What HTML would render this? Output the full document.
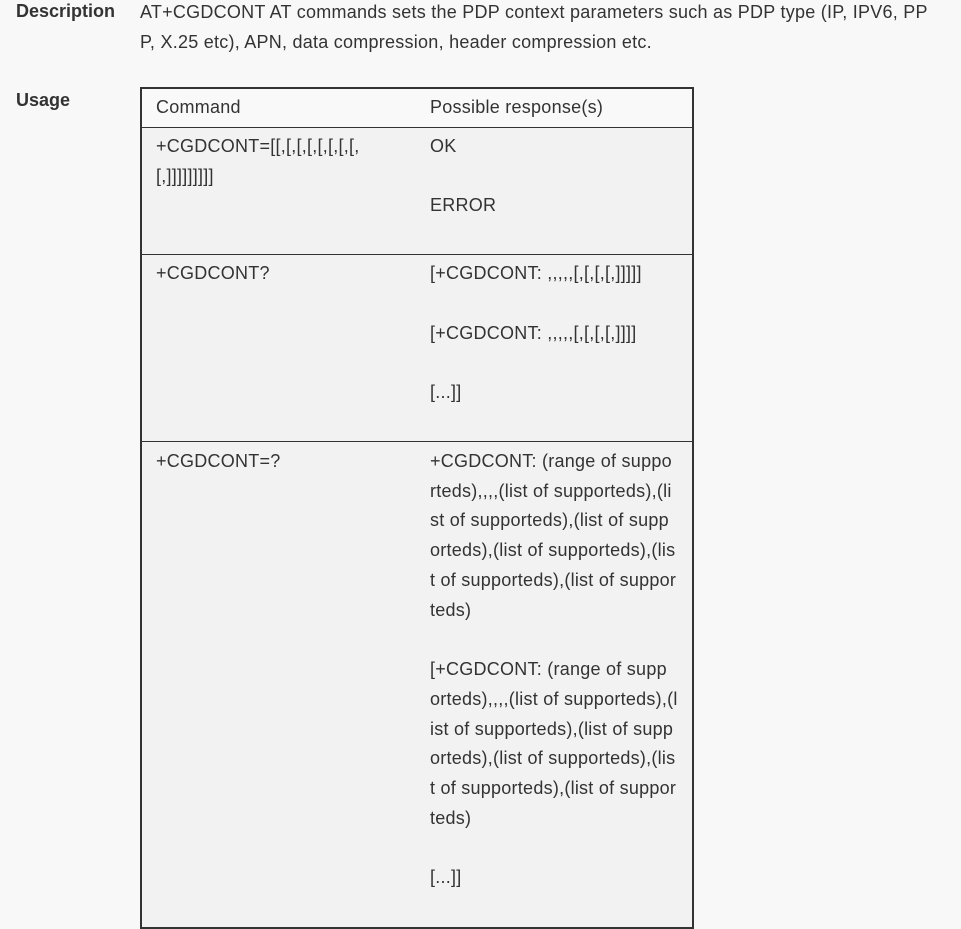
<!DOCTYPE html>
<html><head><meta charset="utf-8"><style>
html,body{margin:0;padding:0;background:#f8f8f8;width:961px;height:900px;overflow:hidden}
body{font-family:"Liberation Sans",Arial,sans-serif;font-size:18px;color:#333;line-height:29.6px;letter-spacing:0.25px}
.lbl{position:absolute;left:16px;font-weight:bold;color:#333;letter-spacing:0}
.desc{position:absolute;left:140px;top:-2px;width:815px;white-space:nowrap}
table{position:absolute;left:140px;top:87px;border-collapse:collapse;border:2px solid #333;width:554px;table-layout:fixed}
td{vertical-align:top;padding:4px 14px 4px 14px;border-top:1px solid #333;background:#f2f2f2;white-space:nowrap}
tr.h td{background:#f9f9f9;border-top:none;height:30px}
td.c1{width:246px}
p{margin:0 0 29.6px}
.r3 td{padding-top:5px;line-height:29.75px}
.r3 p{margin-bottom:29.75px}
</style></head><body>
<div class="lbl" style="top:-3px">Description</div>
<div class="desc">AT+CGDCONT AT commands sets the PDP context parameters such as PDP type (IP, IPV6, PP<br>P, X.25 etc), APN, data compression, header compression etc.</div>
<div class="lbl" style="top:86px">Usage</div>
<table>
<tr class="h"><td class="c1">Command</td><td>Possible response(s)</td></tr>
<tr><td class="c1">+CGDCONT=[[,[,[,[,[,[,[,[,<br>[,]]]]]]]]]</td><td><p>OK</p><p>ERROR</p></td></tr>
<tr><td class="c1">+CGDCONT?</td><td><p>[+CGDCONT: ,,,,,[,[,[,[,]]]]]</p><p>[+CGDCONT: ,,,,,[,[,[,[,]]]]</p><p>[...]]</p></td></tr>
<tr class="r3"><td class="c1">+CGDCONT=?</td><td><p>+CGDCONT: (range of suppo<br>rteds),,,,(list of supporteds),(li<br>st of supporteds),(list of supp<br>orteds),(list of supporteds),(lis<br>t of supporteds),(list of suppor<br>teds)</p><p>[+CGDCONT: (range of supp<br>orteds),,,,(list of supporteds),(l<br>ist of supporteds),(list of supp<br>orteds),(list of supporteds),(lis<br>t of supporteds),(list of suppor<br>teds)</p><p>[...]]</p></td></tr>
</table>
</body></html>
